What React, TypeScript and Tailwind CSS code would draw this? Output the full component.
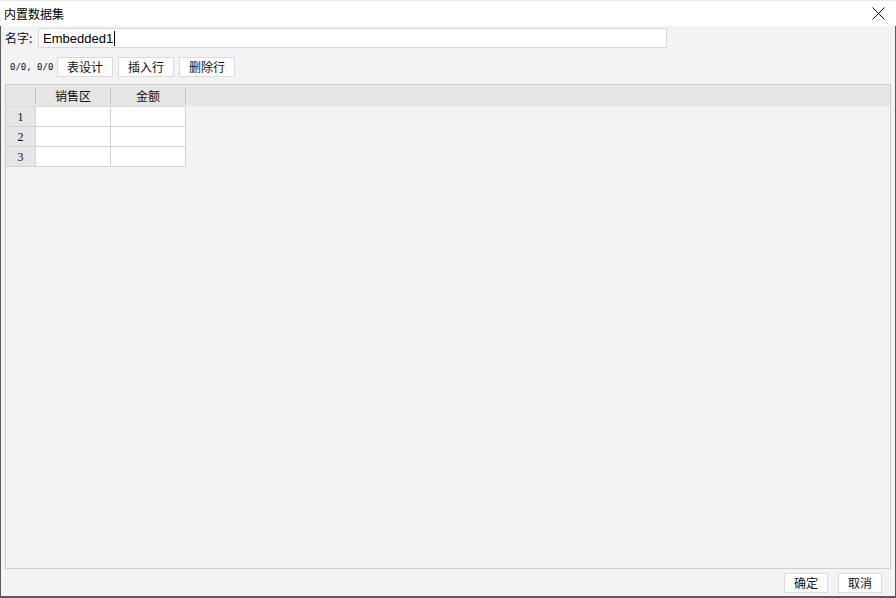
const cjk = { fontFamily: '"Noto Sans CJK SC", "Noto Sans", sans-serif' };

function ToolButton({ label, wide = true }: { label: string; wide?: boolean }) {
  return (
    <button
      className={`h-[20px] ${wide ? 'w-[56px]' : 'w-[44px]'} bg-white border border-[#dcdcdc] text-[12px] leading-none text-[#111] flex items-center justify-center`}
      style={cjk}
    >
      {label}
    </button>
  );
}

const columns = ['销售区', '金额'];
const rows = [1, 2, 3];

export default function App() {
  return (
    <div className="w-[896px] h-[598px] flex flex-col bg-white overflow-hidden" style={cjk}>
      {/* Title bar */}
      <div className="h-[26px] shrink-0 flex items-center justify-between pl-[4px] pr-[10px] bg-white border-t border-[#e8e8e8]">
        <span className="text-[12px] leading-none text-black">内置数据集</span>
        <svg width="13" height="13" viewBox="0 0 13 13" className="mr-[1px]">
          <path d="M0.5 0.5 L12.5 12.5 M12.5 0.5 L0.5 12.5" stroke="#111" strokeWidth="1" />
        </svg>
      </div>

      {/* Body */}
      <div className="flex-1 min-h-0 flex flex-col bg-[#f3f3f5] border-l border-r border-b-2 border-[#5c5c5c]">
        {/* Name */}
        <div className="mt-[2px] h-[20px] flex items-center pl-[4px]">
          <span className="w-[33px] text-[12px] leading-none text-[#111]">名字:</span>
          <div className="h-[20px] w-[629px] bg-white border border-[#d8d8d8] flex items-center pl-[4px]">
            <span className="text-[13px] leading-none text-black" style={{ fontFamily: '"Liberation Sans", Arial, sans-serif' }}>
              Embedded1
            </span>
            <span className="ml-[1px] w-[1px] h-[15px] bg-black" />
          </div>
        </div>

        {/* Toolbar */}
        <div className="mt-[9px] h-[20px] flex items-center pl-[9px]">
          <span className="w-[47px] text-[9px] leading-none text-[#111]" style={{ fontFamily: '"DejaVu Sans Mono", monospace' }}>
            0/0, 0/0
          </span>
          <div className="flex gap-[5px]">
            <ToolButton label="表设计" />
            <ToolButton label="插入行" />
            <ToolButton label="删除行" />
          </div>
        </div>

        {/* Table panel */}
        <div className="mt-[7px] mx-[4px] flex-1 min-h-0 border border-[#cdcdcd] bg-[#f3f3f5] flex flex-col">
          <div className="h-[21px] bg-[#e6e6e6] flex">
            <div className="w-[30px] h-full flex items-center justify-end">
              <span className="w-px h-[14px] bg-[#c4bea9]" />
            </div>
            {columns.map((c) => (
              <div key={c} className="w-[75px] h-full flex items-center justify-end">
                <span className="flex-1 text-center text-[12px] leading-none text-[#111]">{c}</span>
                <span className="w-px h-[14px] bg-[#c4bea9]" />
              </div>
            ))}
          </div>
          <div className="w-[180px] border-t border-[#dcdcdc]">
            {rows.map((r) => (
              <div key={r} className="h-[20px] flex border-b border-[#d4d4d4]">
                <div
                  className="w-[30px] bg-[#e6e6e6] border-r border-[#d4d4d4] flex items-center justify-center text-[12px] leading-none text-[#111]"
                  style={{ fontFamily: '"Liberation Serif", serif' }}
                >
                  {r}
                </div>
                <div className="w-[75px] bg-white border-r border-[#d4d4d4]" />
                <div className="w-[75px] bg-white border-r border-[#d4d4d4]" />
              </div>
            ))}
          </div>
        </div>

        {/* Footer */}
        <div className="mt-[4px] mb-[3px] h-[20px] flex justify-end gap-[10px] pr-[13px]">
          <ToolButton label="确定" wide={false} />
          <ToolButton label="取消" wide={false} />
        </div>
      </div>
    </div>
  );
}
